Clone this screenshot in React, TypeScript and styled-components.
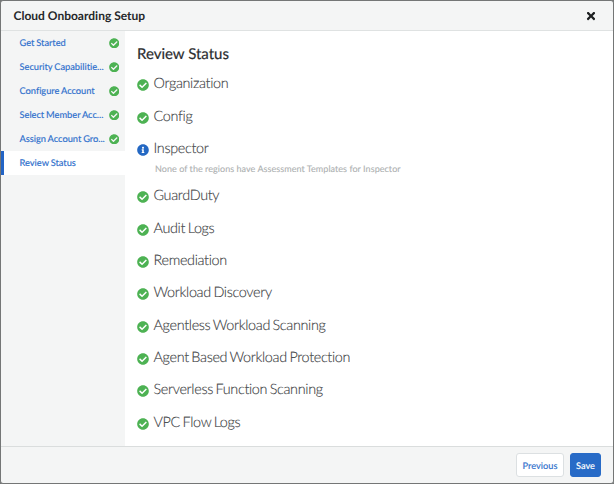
import React from "react";
import styled, { createGlobalStyle } from "styled-components";
import { FaCheckCircle, FaInfoCircle, FaTimes } from "react-icons/fa";

const GlobalStyle = createGlobalStyle`
  * { box-sizing: border-box; }
  body { margin: 0; background: #747676; font-family: Lato, sans-serif; overflow: hidden; text-rendering: geometricPrecision; }
  button { font-family: inherit; text-rendering: inherit; }
`;

const Dialog = styled.div`
  display: flex;
  flex-direction: column;
  width: 614px;
  height: 484px;
  border: 1px solid #747676;
  border-radius: 3px;
  background: #f4f5f5;
  overflow: hidden;
`;

const Header = styled.header`
  display: flex;
  flex: none;
  align-items: center;
  justify-content: space-between;
  height: 30px;
  padding: 0 16px 0 12.5px;
  border-bottom: 1px solid #dfe2e2;
`;

const Title = styled.h1`
  margin: 0;
  font-size: 12px;
  line-height: 28px;
  font-weight: 700;
  color: #26282a;
  white-space: nowrap;
`;

const CloseButton = styled.button`
  display: flex;
  padding: 0;
  border: 0;
  background: none;
  color: #1d1f21;
  font-size: 12px;
`;

const Body = styled.div`
  display: flex;
  flex: 1;
  min-height: 0;
`;

const Sidebar = styled.nav`
  flex: none;
  width: 124px;
`;

const Step = styled.a<{ $active?: boolean }>`
  display: flex;
  align-items: center;
  justify-content: space-between;
  height: 24px;
  padding: 0 6px 0 15.5px;
  border-left: 3px solid ${(p) => (p.$active ? "#2264c5" : "transparent")};
  background: ${(p) => (p.$active ? "#fff" : "transparent")};
`;

const StepLabel = styled.span`
  padding-bottom: 1px;
  font-size: 9.3px;
  letter-spacing: -0.04px;
  word-spacing: -0.4px;
  font-weight: 500;
  -webkit-text-stroke: 0.1px currentColor;
  color: #3272cd;
  white-space: nowrap;
`;

const StatusIcon = styled.span<{ $size: number; $info?: boolean }>`
  display: flex;
  flex: none;
  font-size: ${(p) => p.$size}px;
  color: ${(p) => (p.$info ? "#2468c3" : "#4db253")};
`;

const Content = styled.main`
  flex: 1;
  padding: 14px 12px 0;
  background: #fff;
`;

const Heading = styled.h2`
  margin: 0 0 6px;
  font-size: 15px;
  line-height: 18px;
  font-weight: 400;
  -webkit-text-stroke: 0.2px currentColor;
  color: #2b2d2f;
`;

const StatusRow = styled.div`
  display: flex;
  align-items: center;
  gap: 4.5px;
  height: 32.35px;
`;

const StatusLabel = styled.span`
  font-size: 14.4px;
  letter-spacing: -0.33px;
  word-spacing: -1px;
  line-height: 18px;
  padding-bottom: 2px;
  font-weight: 300;
  -webkit-text-stroke: 0.15px currentColor;
  color: #424446;
  white-space: nowrap;
`;

const Note = styled.p`
  margin: -4px 0 1px 18px;
  height: 18px;
  font-size: 9px;
  letter-spacing: 0.05px;
  line-height: 13px;
  -webkit-text-stroke: 0.1px currentColor;
  color: #adb0b1;
  white-space: nowrap;
`;

const Footer = styled.footer`
  display: flex;
  flex: none;
  justify-content: flex-end;
  gap: 6px;
  height: 37px;
  padding: 6px 12px 0;
  border-top: 1px solid #dadddd;
`;

const Button = styled.button<{ $primary?: boolean; $width: number }>`
  width: ${(p) => p.$width}px;
  height: 24px;
  padding: 0;
  border: 1px solid ${(p) => (p.$primary ? "#286bc7" : "#dce0e2")};
  border-radius: 3px;
  background: ${(p) => (p.$primary ? "#286bc7" : "#fff")};
  color: ${(p) => (p.$primary ? "#fff" : "#3272cd")};
  font-size: 9.2px;
  font-weight: 500;
  -webkit-text-stroke: 0.1px currentColor;
`;

const steps = [
  { label: "Get Started" },
  { label: "Security Capabilitie..." },
  { label: "Configure Account" },
  { label: "Select Member Acc..." },
  { label: "Assign Account Gro..." },
  { label: "Review Status", active: true },
];

const statuses: { label: string; note?: string }[] = [
  { label: "Organization" },
  { label: "Config" },
  { label: "Inspector", note: "None of the regions have Assessment Templates for Inspector" },
  { label: "GuardDuty" },
  { label: "Audit Logs" },
  { label: "Remediation" },
  { label: "Workload Discovery" },
  { label: "Agentless Workload Scanning" },
  { label: "Agent Based Workload Protection" },
  { label: "Serverless Function Scanning" },
  { label: "VPC Flow Logs" },
];

export default function App() {
  return (
    <>
      <GlobalStyle />
      <Dialog>
        <Header>
          <Title>Cloud Onboarding Setup</Title>
          <CloseButton aria-label="Close"><FaTimes /></CloseButton>
        </Header>
        <Body>
          <Sidebar>
            {steps.map((s) => (
              <Step key={s.label} $active={s.active}>
                <StepLabel>{s.label}</StepLabel>
                {!s.active && <StatusIcon $size={10.5}><FaCheckCircle /></StatusIcon>}
              </Step>
            ))}
          </Sidebar>
          <Content>
            <Heading>Review Status</Heading>
            {statuses.map((s) => (
              <React.Fragment key={s.label}>
                <StatusRow>
                  <StatusIcon $size={12} $info={!!s.note}>
                    {s.note ? <FaInfoCircle /> : <FaCheckCircle />}
                  </StatusIcon>
                  <StatusLabel>{s.label}</StatusLabel>
                </StatusRow>
                {s.note && <Note>{s.note}</Note>}
              </React.Fragment>
            ))}
          </Content>
        </Body>
        <Footer>
          <Button $width={48}>Previous</Button>
          <Button $primary $width={31}>Save</Button>
        </Footer>
      </Dialog>
    </>
  );
}
